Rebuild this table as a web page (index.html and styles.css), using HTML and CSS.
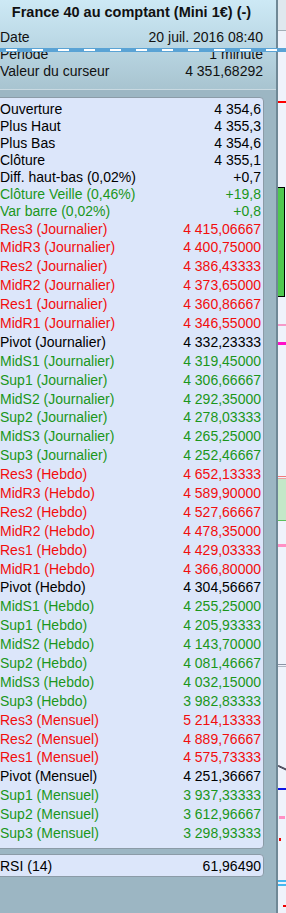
FILE: index.html
```html
<!DOCTYPE html>
<html lang="fr">
<head>
<meta charset="utf-8">
<title>France 40 au comptant</title>
<link rel="stylesheet" href="styles.css">
</head>
<body>
<div class="app">
  <div class="panel">
    <div class="header">
      <div class="title">France 40 au comptant (Mini 1€) (-)</div>
      <div class="hrow"><span>Date</span><span>20 juil. 2016 08:40</span></div>
      <div class="hrow"><span>Période</span><span>1 minute</span></div>
      <div class="hrow"><span>Valeur du curseur</span><span>4 351,68292</span></div>
    </div>
    <div class="box">
      <div class="row"><span>Ouverture</span><span>4 354,6</span></div>
      <div class="row"><span>Plus Haut</span><span>4 355,3</span></div>
      <div class="row"><span>Plus Bas</span><span>4 354,6</span></div>
      <div class="row"><span>Clôture</span><span>4 355,1</span></div>
      <div class="row"><span>Diff. haut-bas (0,02%)</span><span>+0,7</span></div>
      <div class="row up"><span>Clôture Veille (0,46%)</span><span>+19,8</span></div>
      <div class="row up"><span>Var barre (0,02%)</span><span>+0,8</span></div>
      <div class="row lvl res"><span>Res3 (Journalier)</span><span>4 415,06667</span></div>
      <div class="row lvl res"><span>MidR3 (Journalier)</span><span>4 400,75000</span></div>
      <div class="row lvl res"><span>Res2 (Journalier)</span><span>4 386,43333</span></div>
      <div class="row lvl res"><span>MidR2 (Journalier)</span><span>4 373,65000</span></div>
      <div class="row lvl res"><span>Res1 (Journalier)</span><span>4 360,86667</span></div>
      <div class="row lvl res"><span>MidR1 (Journalier)</span><span>4 346,55000</span></div>
      <div class="row lvl"><span>Pivot (Journalier)</span><span>4 332,23333</span></div>
      <div class="row lvl up"><span>MidS1 (Journalier)</span><span>4 319,45000</span></div>
      <div class="row lvl up"><span>Sup1 (Journalier)</span><span>4 306,66667</span></div>
      <div class="row lvl up"><span>MidS2 (Journalier)</span><span>4 292,35000</span></div>
      <div class="row lvl up"><span>Sup2 (Journalier)</span><span>4 278,03333</span></div>
      <div class="row lvl up"><span>MidS3 (Journalier)</span><span>4 265,25000</span></div>
      <div class="row lvl up"><span>Sup3 (Journalier)</span><span>4 252,46667</span></div>
      <div class="row lvl res"><span>Res3 (Hebdo)</span><span>4 652,13333</span></div>
      <div class="row lvl res"><span>MidR3 (Hebdo)</span><span>4 589,90000</span></div>
      <div class="row lvl res"><span>Res2 (Hebdo)</span><span>4 527,66667</span></div>
      <div class="row lvl res"><span>MidR2 (Hebdo)</span><span>4 478,35000</span></div>
      <div class="row lvl res"><span>Res1 (Hebdo)</span><span>4 429,03333</span></div>
      <div class="row lvl res"><span>MidR1 (Hebdo)</span><span>4 366,80000</span></div>
      <div class="row lvl"><span>Pivot (Hebdo)</span><span>4 304,56667</span></div>
      <div class="row lvl up"><span>MidS1 (Hebdo)</span><span>4 255,25000</span></div>
      <div class="row lvl up"><span>Sup1 (Hebdo)</span><span>4 205,93333</span></div>
      <div class="row lvl up"><span>MidS2 (Hebdo)</span><span>4 143,70000</span></div>
      <div class="row lvl up"><span>Sup2 (Hebdo)</span><span>4 081,46667</span></div>
      <div class="row lvl up"><span>MidS3 (Hebdo)</span><span>4 032,15000</span></div>
      <div class="row lvl up"><span>Sup3 (Hebdo)</span><span>3 982,83333</span></div>
      <div class="row lvl res"><span>Res3 (Mensuel)</span><span>5 214,13333</span></div>
      <div class="row lvl res"><span>Res2 (Mensuel)</span><span>4 889,76667</span></div>
      <div class="row lvl res"><span>Res1 (Mensuel)</span><span>4 575,73333</span></div>
      <div class="row lvl"><span>Pivot (Mensuel)</span><span>4 251,36667</span></div>
      <div class="row lvl up"><span>Sup1 (Mensuel)</span><span>3 937,33333</span></div>
      <div class="row lvl up"><span>Sup2 (Mensuel)</span><span>3 612,96667</span></div>
      <div class="row lvl up"><span>Sup3 (Mensuel)</span><span>3 298,93333</span></div>
    </div>
    <div class="box rsi">
      <div class="row"><span>RSI (14)</span><span>61,96490</span></div>
    </div>
  </div>
  <div class="chart">
    <div class="chart-top"></div>
    <div class="mk red-line"></div>
    <div class="mk green-bar"></div>
    <div class="mk pink-line"></div>
    <div class="mk magenta-line"></div>
    <div class="mk salmon-lines"></div>
    <div class="mk pale-box"></div>
    <div class="mk pink-line2"></div>
    <div class="mk grey-lines"></div>
    <svg class="mk tri" width="8" height="6" viewBox="0 0 8 6"><path d="M0.5 0.5 L8 4 L8 5 L0.5 1.5 Z" fill="#9aa0b8" stroke="#404050" stroke-width="1"/></svg>
    <div class="mk blue-line"></div>
    <div class="mk pink-dash"></div>
    <div class="mk red-dot"></div>
    <div class="mk cyan-lines"></div>
    <div class="mk red-dash"></div>
  </div>
  <div class="cursor-line"></div>
</div>
</body>
</html>
```

FILE: styles.css
```css
html, body {
  margin: 0;
  padding: 0;
}
body {
  width: 286px;
  height: 913px;
  overflow: hidden;
  font-family: "Liberation Sans", Arial, sans-serif;
  font-size: 14px;
  color: #000;
}
.app {
  position: relative;
  display: flex;
  height: 913px;
}
.panel {
  width: 276px;
  flex: none;
  background: #9cb6c3;
  border-right: 2px solid #6f8896;
  display: flex;
  flex-direction: column;
}
.header {
  height: 90px;
  box-sizing: border-box;
  border-bottom: 1px solid #c9d9e1;
  background: linear-gradient(to bottom, #cde9f5 0%, #bcd9e6 45%, #a8c4d0 100%);
  padding: 3px 13px 0 0;
}
.title {
  font-weight: bold;
  font-size: 14.5px;
  line-height: 18px;
  text-align: center;
  color: #111;
  margin-bottom: 8px;
}
.hrow {
  display: flex;
  justify-content: space-between;
  height: 17px;
  line-height: 17px;
  color: #111;
}
.box {
  margin: 7px 0 0 -4px;
  width: 268px;
  box-sizing: border-box;
  background: #dce6fa;
  border: 1px solid #8b9ba7;
  border-radius: 4px;
  padding: 2.5px 2px 5px 3px;
}
.box.rsi {
  margin-top: 5px;
  padding: 2px 2px 1px 3px;
  height: 23px;
}
.row {
  display: flex;
  justify-content: space-between;
  height: 17px;
  line-height: 17px;
  white-space: nowrap;
}
.row.lvl {
  height: 18.9px;
  line-height: 18.9px;
}
.rsi .row {
  height: 19px;
  line-height: 19px;
}
.res { color: #f20d0d; }
.up { color: #1b961b; }

.chart {
  flex: 1;
  position: relative;
  background: #eff3fb;
}
.chart-top {
  height: 30px;
  background: #dfe8ee;
  border-bottom: 1px solid #a4afb7;
}
.mk { position: absolute; left: 0; right: 0; }
.red-line { top: 101px; height: 2px; background: #ff0000; }
.green-bar { top: 187px; height: 110px; right: 1px; background: #4fc84f; border: 1px solid #000; border-left: none; box-sizing: border-box; }
.pink-line { top: 324px; height: 2px; background: #f59ac8; }
.magenta-line { top: 342px; height: 3px; background: #ff10c8; }
.salmon-lines { top: 476px; height: 3px; border-top: 1px solid #f07c7c; border-bottom: 1px solid #f0a0a0; box-sizing: border-box; }
.pale-box { top: 479px; height: 42px; background: #c3e8c8; border-bottom: 1px solid #5cc05c; box-sizing: border-box; }
.pink-line2 { top: 544px; height: 3px; background: #ff90c4; }
.grey-lines { top: 664px; height: 3px; border-top: 1px solid #8a94a4; border-bottom: 1px solid #b0b8c4; box-sizing: border-box; }
.tri { top: 765px; left: 0; }
.blue-line { top: 788px; height: 2px; background: #0a14e6; }
.pink-dash { top: 816px; height: 3px; left: 1px; right: 1px; background: #ff90c4; }
.red-dot { top: 838px; height: 3px; left: 1px; right: 5px; background: #ee0000; }
.cyan-lines { top: 880px; height: 6px; border-top: 2px solid #44b8f0; border-bottom: 2px solid #44b8f0; box-sizing: border-box; }
.red-dash { top: 905px; height: 2px; left: 5px; background: #ee0000; }

.cursor-line {
  position: absolute;
  left: 0;
  right: 0;
  top: 47.5px;
  height: 4px;
  background: #5aa3d5;
}
.cursor-line::after {
  content: "";
  position: absolute;
  left: 0;
  right: 0;
  top: 1px;
  height: 2px;
  background: repeating-linear-gradient(to right, transparent 0 6px, #ffffff 6px 17px, transparent 17px 26px);
}
```
